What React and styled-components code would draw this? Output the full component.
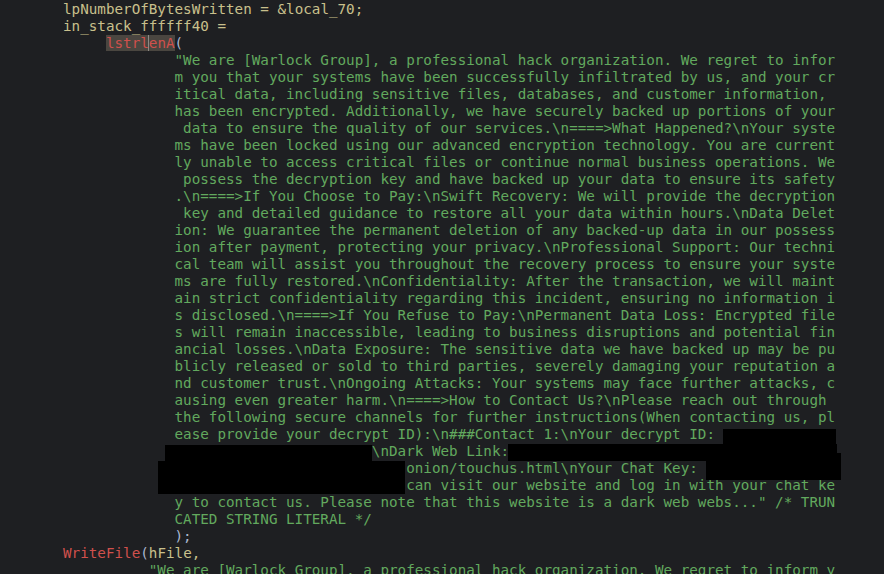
import React from 'react';
import styled, { createGlobalStyle } from 'styled-components';

const GlobalStyle = createGlobalStyle`
  html, body {
    margin: 0;
    padding: 0;
    background: #1e1f22;
  }
`;

const CodePanel = styled.div`
  position: relative;
  width: 884px;
  height: 574px;
  overflow: hidden;
  background: #1e1f22;
  padding: 1px 0 0 63px;
  box-sizing: border-box;
  font-family: "DejaVu Sans Mono", "Liberation Mono", monospace;
  font-size: 14.25px;
  line-height: 17px;
  color: #c9c08c;
`;

const Line = styled.div`
  white-space: pre;
  height: 17px;
  padding-left: ${(p) => p.$indent || 0}ch;
`;

const Ident = styled.span`
  color: #c9c08c;
`;

const Func = styled.span`
  color: #d0504c;
`;

const Str = styled.span`
  color: #62a95e;
`;

const Punct = styled.span`
  color: #a9b7d0;
`;

const Highlight = styled.span`
  background: #4a4640;
  color: #d0504c;
`;

const Caret = styled.span`
  position: relative;
  &::before {
    content: '';
    position: absolute;
    left: -1px;
    top: 0;
    bottom: 0;
    width: 1px;
    background: #8d8a85;
  }
`;

const Redact = styled.div`
  position: absolute;
  background: #000;
  left: ${(p) => p.$x}px;
  top: ${(p) => p.$y}px;
  width: ${(p) => p.$w}px;
  height: ${(p) => p.$h}px;
`;

const messageLines = [
  '"We are [Warlock Group], a professional hack organization. We regret to infor',
  'm you that your systems have been successfully infiltrated by us, and your cr',
  'itical data, including sensitive files, databases, and customer information,',
  'has been encrypted. Additionally, we have securely backed up portions of your',
  ' data to ensure the quality of our services.\\n====>What Happened?\\nYour syste',
  'ms have been locked using our advanced encryption technology. You are current',
  'ly unable to access critical files or continue normal business operations. We',
  ' possess the decryption key and have backed up your data to ensure its safety',
  '.\\n====>If You Choose to Pay:\\nSwift Recovery: We will provide the decryption',
  ' key and detailed guidance to restore all your data within hours.\\nData Delet',
  'ion: We guarantee the permanent deletion of any backed-up data in our possess',
  'ion after payment, protecting your privacy.\\nProfessional Support: Our techni',
  'cal team will assist you throughout the recovery process to ensure your syste',
  'ms are fully restored.\\nConfidentiality: After the transaction, we will maint',
  'ain strict confidentiality regarding this incident, ensuring no information i',
  's disclosed.\\n====>If You Refuse to Pay:\\nPermanent Data Loss: Encrypted file',
  's will remain inaccessible, leading to business disruptions and potential fin',
  'ancial losses.\\nData Exposure: The sensitive data we have backed up may be pu',
  'blicly released or sold to third parties, severely damaging your reputation a',
  'nd customer trust.\\nOngoing Attacks: Your systems may face further attacks, c',
  'ausing even greater harm.\\n====>How to Contact Us?\\nPlease reach out through ',
  'the following secure channels for further instructions(When contacting us, pl',
  'ease provide your decrypt ID):\\n###Contact 1:\\nYour decrypt ID: ',
  ' '.repeat(23) + '\\nDark Web Link: ',
  ' '.repeat(27) + 'onion/touchus.html\\nYour Chat Key: ',
  ' '.repeat(27) + 'can visit our website and log in with your chat ke',
  'y to contact us. Please note that this website is a dark web webs..." /* TRUN',
  'CATED STRING LITERAL */',
];

const redactions = [
  { x: 723, y: 429, w: 113, h: 17 },
  { x: 508, y: 444, w: 329, h: 17 },
  { x: 165, y: 445, w: 207, h: 16 },
  { x: 158, y: 461, w: 247, h: 33 },
  { x: 706, y: 453, w: 135, h: 27 },
];

function App() {
  return (
    <>
      <GlobalStyle />
      <CodePanel>
        <Line>
          <Ident>lpNumberOfBytesWritten = &amp;local_70;</Ident>
        </Line>
        <Line>
          <Ident>in_stack_ffffff40 =</Ident>
        </Line>
        <Line $indent={5}>
          <Highlight>
            lstrl<Caret />enA
          </Highlight>
          <Punct>(</Punct>
        </Line>
        {messageLines.map((text, i) => (
          <Line key={i} $indent={13}>
            <Str>{text}</Str>
          </Line>
        ))}
        <Line $indent={13}>
          <Punct>);</Punct>
        </Line>
        <Line>
          <Func>WriteFile</Func>
          <Punct>(</Punct>
          <Ident>hFile,</Ident>
        </Line>
        <Line $indent={10}>
          <Str>"We are [Warlock Group], a professional hack organization. We regret to inform y</Str>
        </Line>
        {redactions.map((r, i) => (
          <Redact key={i} $x={r.x} $y={r.y} $w={r.w} $h={r.h} />
        ))}
      </CodePanel>
    </>
  );
}

export default App;
